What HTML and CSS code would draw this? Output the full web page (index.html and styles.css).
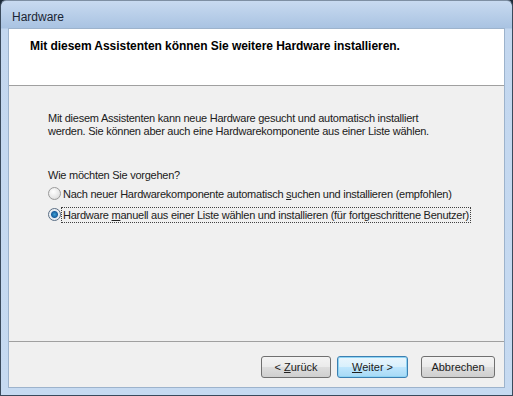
FILE: index.html
```html
<!DOCTYPE html>
<html lang="de">
<head>
<meta http-equiv="content-type" content="text/html; charset=utf-8"/>
<title>Hardware</title>
<link rel="stylesheet" href="styles.css">
</head>

<body>

<div class="window">

<div class="titlebar">Hardware</div>

<div class="client">

	<div class="header">
		<span class="header_text">Mit diesem Assistenten können Sie weitere Hardware installieren.</span>
	</div>

	<div class="content">
		<p class="intro">Mit diesem Assistenten kann neue Hardware gesucht und automatisch installiert<br>werden. Sie können aber auch eine Hardwarekomponente aus einer Liste wählen.</p>

		<p class="question">Wie möchten Sie vorgehen?</p>

		<div class="option">
			<span class="radio"></span>
			<span class="label">Nach neuer Hardwarekomponente automatisch <u>s</u>uchen und installieren (empfohlen)</span>
		</div>
		<div class="option">
			<span class="radio checked"></span>
			<span class="label focused">Hardware <u>m</u>anuell aus einer Liste wählen und installieren (für fortgeschrittene Benutzer)</span>
		</div>
	</div>

	<div class="footer">
		<button class="btn">&lt; <u>Z</u>urück</button>
		<button class="btn default"><u>W</u>eiter &gt;</button>
		<button class="btn cancel">Abbrechen</button>
	</div>

</div>

</div>

</body>
</html>
```

FILE: styles.css
```css
html, body {
margin: 0;
padding: 0;
background: #1c2a38;
}

body {
font: 11px "Liberation Sans", Arial, sans-serif;
letter-spacing: -0.25px;
color: #000000;
}

/* window frame */

.window {
width: 513px;
height: 396px;
box-sizing: border-box;
display: flex;
flex-direction: column;
padding: 0 7px 7px 7px;
border: 1px solid #3a4a5c;
border-top-color: #7e8fa3;
border-radius: 6px 6px 0 0;
background: linear-gradient(to bottom, #c8daf0 0, #a9c3e2 27px, #c3d7ef 28px, #c6daf1 100%);
}

.titlebar {
height: 27px;
line-height: 32px;
padding-left: 4px;
font-size: 12px;
letter-spacing: 0;
color: #1a2533;
flex: none;
}

.client {
flex: 1;
display: flex;
flex-direction: column;
background-color: #f0f0f0;
border: 1px solid #9db3cc;
}

/* header */

.header {
height: 57px;
flex: none;
background-color: #ffffff;
border-bottom: 1px solid #a0a0a0;
padding: 10px 0 0 21px;
box-sizing: border-box;
}

.header_text {
font-weight: bold;
font-size: 12px;
letter-spacing: -0.05px;
}

/* content */

.content {
flex: 1;
padding: 26px 0 0 39px;
}

.intro {
margin: 0;
white-space: nowrap;
line-height: 13px;
color: #202020;
}

.question {
margin: 31px 0 2px 0;
color: #202020;
}

.option {
display: flex;
align-items: center;
height: 21px;
}

.radio {
width: 11px;
height: 11px;
border-radius: 50%;
border: 1px solid #9a9a9a;
background: radial-gradient(circle at 40% 35%, #ffffff 0, #e6e6e6 60%, #cfcfcf 100%);
flex: none;
box-sizing: content-box;
}

.radio.checked {
border-color: #5a6e84;
background: radial-gradient(circle, #3aa0d4 0, #1a5f9e 3px, #e4eaf0 4px, #ffffff 100%);
}

.label {
padding: 1px 1px;
color: #202020;
border: 1px dotted transparent;
}

.label.focused {
border-color: #404040;
}

/* footer with buttons */

.footer {
height: 46px;
flex: none;
display: flex;
align-items: flex-start;
justify-content: flex-end;
padding: 14px 9px 0 0;
box-sizing: border-box;
border-top: 1px solid #a0a0a0;
}

.btn {
font: inherit;
color: #202020;
width: 70px;
height: 22px;
margin-left: 6px;
padding: 0;
border: 1px solid #707070;
border-radius: 3px;
background: linear-gradient(to bottom, #f4f4f4 0, #ebebeb 48%, #dddddd 52%, #cfcfcf 100%);
}

.btn.default {
width: 71px;
border-color: #3c7fb1;
box-shadow: inset 0 0 0 1px #8fd4f4;
background: linear-gradient(to bottom, #eaf6fd 0, #d9f0fc 48%, #bee6fd 52%, #a7d9f5 100%);
}

.btn.cancel {
margin-left: 13px;
width: 74px;
}
```
